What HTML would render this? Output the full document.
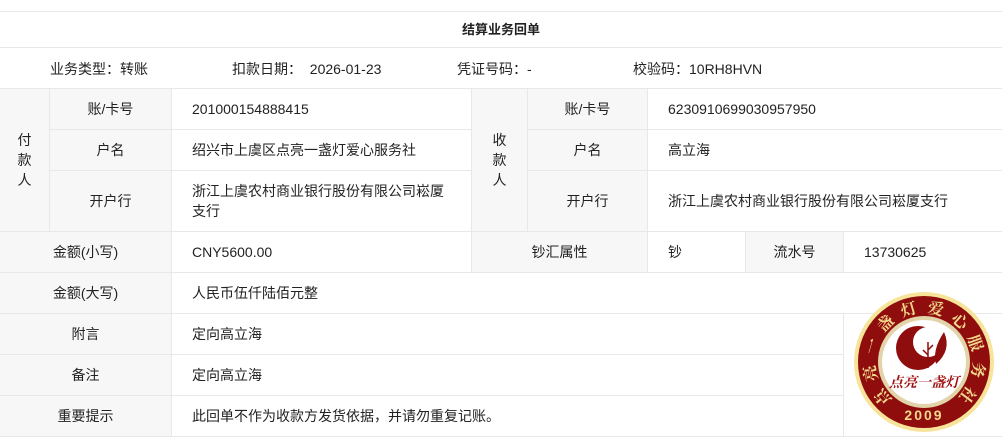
<!DOCTYPE html>
<html><head><meta charset="utf-8"><style>
*{margin:0;padding:0;box-sizing:border-box}
body{width:1002px;height:445px;background:#fff;font-family:"Liberation Sans","Noto Sans CJK SC",sans-serif;font-size:14px;color:#222;position:relative;overflow:hidden}
.c{position:absolute;border-right:1px solid #e8e8e8;border-bottom:1px solid #e8e8e8;display:flex;align-items:center;line-height:20px}
.g{background:#f7f7f7;justify-content:center;text-align:center}
.v{padding-left:20px;background:#fff}
.t{position:absolute;line-height:20px}
</style></head><body>
<div style="position:absolute;left:0;top:11px;width:1002px;height:1px;background:#e8e8e8"></div>
<div class="c" style="left:0;top:12px;width:1002px;height:36px;justify-content:center;font-weight:bold;font-size:13px;border-right:none">结算业务回单</div>
<div class="c" style="left:0;top:48px;width:1002px;height:41px;border-right:none"></div>
<div class="t" style="left:50px;top:59px">业务类型：转账</div>
<div class="t" style="left:232px;top:59px">扣款日期：&nbsp; 2026-01-23</div>
<div class="t" style="left:457px;top:59px">凭证号码：-</div>
<div class="t" style="left:633px;top:59px">校验码：10RH8HVN</div>

<div class="c g" style="left:0;top:89px;width:50px;height:143px">付<br>款<br>人</div>
<div class="c g" style="left:50px;top:89px;width:122px;height:41px">账/卡号</div>
<div class="c v" style="left:172px;top:89px;width:300px;height:41px">201000154888415</div>
<div class="c g" style="left:50px;top:130px;width:122px;height:41px">户名</div>
<div class="c v" style="left:172px;top:130px;width:300px;height:41px">绍兴市上虞区点亮一盏灯爱心服务社</div>
<div class="c g" style="left:50px;top:171px;width:122px;height:61px">开户行</div>
<div class="c v" style="left:172px;top:171px;width:300px;height:61px;padding-right:22px">浙江上虞农村商业银行股份有限公司崧厦支行</div>

<div class="c g" style="left:472px;top:89px;width:56px;height:143px">收<br>款<br>人</div>
<div class="c g" style="left:528px;top:89px;width:120px;height:41px">账/卡号</div>
<div class="c v" style="left:648px;top:89px;width:354px;height:41px;border-right:none">6230910699030957950</div>
<div class="c g" style="left:528px;top:130px;width:120px;height:41px">户名</div>
<div class="c v" style="left:648px;top:130px;width:354px;height:41px;border-right:none">高立海</div>
<div class="c g" style="left:528px;top:171px;width:120px;height:61px">开户行</div>
<div class="c v" style="left:648px;top:171px;width:354px;height:61px;border-right:none">浙江上虞农村商业银行股份有限公司崧厦支行</div>

<div class="c g" style="left:0;top:232px;width:172px;height:41px">金额(小写)</div>
<div class="c v" style="left:172px;top:232px;width:300px;height:41px">CNY5600.00</div>
<div class="c g" style="left:472px;top:232px;width:176px;height:41px">钞汇属性</div>
<div class="c v" style="left:648px;top:232px;width:98px;height:41px">钞</div>
<div class="c g" style="left:746px;top:232px;width:98px;height:41px">流水号</div>
<div class="c v" style="left:844px;top:232px;width:158px;height:41px;border-right:none">13730625</div>

<div class="c g" style="left:0;top:273px;width:172px;height:41px">金额(大写)</div>
<div class="c v" style="left:172px;top:273px;width:830px;height:41px;border-right:none">人民币伍仟陆佰元整</div>
<div class="c g" style="left:0;top:314px;width:172px;height:41px">附言</div>
<div class="c v" style="left:172px;top:314px;width:672px;height:41px">定向高立海</div>
<div class="c g" style="left:0;top:355px;width:172px;height:41px">备注</div>
<div class="c v" style="left:172px;top:355px;width:672px;height:41px">定向高立海</div>
<div class="c g" style="left:0;top:396px;width:172px;height:41px">重要提示</div>
<div class="c v" style="left:172px;top:396px;width:672px;height:41px">此回单不作为收款方发货依据，并请勿重复记账。</div>
<div class="c" style="left:844px;top:314px;width:158px;height:123px;border-right:none"></div>

<svg style="position:absolute;left:852px;top:290px" width="144" height="144" viewBox="0 0 144 144">
<defs><path id="arc" d="M40.5 109.5 A49 49 0 1 1 103.5 109.5"/></defs>
<circle cx="72" cy="72" r="70" fill="#f7e49a"/>
<circle cx="72" cy="72" r="66" fill="#8f0d0d"/>
<circle cx="72" cy="72" r="46" fill="#e3d3a8"/>
<circle cx="72" cy="72" r="42" fill="#fff"/>
<text font-family="Noto Serif CJK SC,serif" font-size="16" font-weight="bold" fill="#f3d88c"><textPath href="#arc" textLength="236" lengthAdjust="spacing">点亮一盏灯爱心服务社</textPath></text>
<text x="72" y="130" text-anchor="middle" font-family="Liberation Sans,sans-serif" font-size="14" font-weight="bold" fill="#f3d88c" letter-spacing="2">2009</text>
<circle cx="66" cy="58" r="22" fill="#8f0d0d"/>
<circle cx="76" cy="52" r="15" fill="#fff"/>
<path d="M92 42 Q100 60 84 74 Q80 60 92 42Z" fill="#8f0d0d"/>
<path d="M76 78 L76 52 M76 60 L81 55 M76 65 L71 60" stroke="#8f0d0d" stroke-width="1.5" fill="none"/>
<text x="72" y="97" text-anchor="middle" font-family="Noto Serif CJK SC,serif" font-size="14" font-style="italic" font-weight="bold" fill="#a01010">点亮一盏灯</text>
</svg>
</body></html>
